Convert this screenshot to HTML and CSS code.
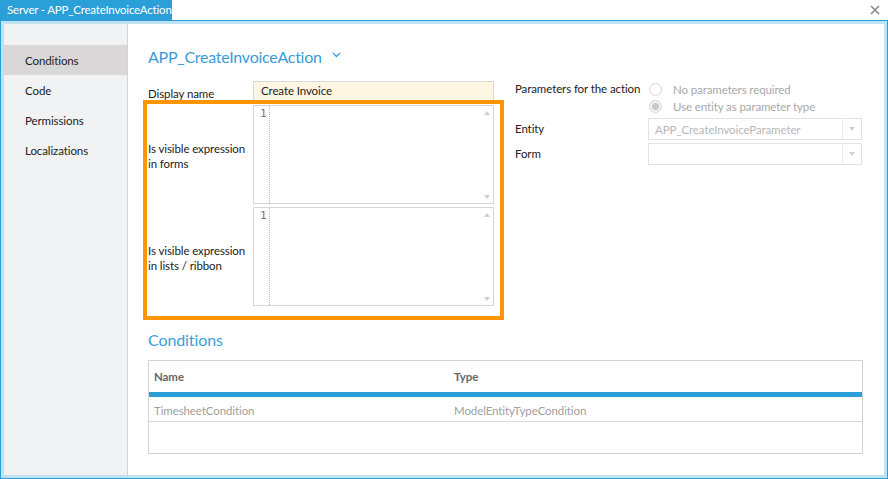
FILE: index.html
```html
<!DOCTYPE html>
<html>
<head>
<meta charset="utf-8">
<link rel="stylesheet" href="styles.css">
</head>
<body>
<div class="window">
  <div class="titlebar">
    <div class="tab">Server - APP_CreateInvoiceAction</div>
    <div class="close">
      <svg width="10" height="10" viewBox="0 0 10 10"><path d="M1 1L9 9M9 1L1 9" stroke="#8a8a8a" stroke-width="1.6"/></svg>
    </div>
  </div>
  <div class="frame">
    <div class="inner">
      <nav class="sidebar">
        <div class="nav-item active">Conditions</div>
        <div class="nav-item">Code</div>
        <div class="nav-item">Permissions</div>
        <div class="nav-item">Localizations</div>
      </nav>
      <main class="main">
        <div class="title">
          <span>APP_CreateInvoiceAction</span>
          <svg class="chev" width="9" height="6" viewBox="0 0 9 6"><path d="M1 1L4.5 4.5L8 1" fill="none" stroke="#3a9bd8" stroke-width="1.3"/></svg>
        </div>
        <div class="top">
          <div class="form">
            <div class="lbl">Display name</div>
            <div class="input">Create Invoice</div>
            <div class="lbl lbl-ed">Is visible expression<br>in forms</div>
            <div class="editor">
              <div class="gutter">1</div>
              <div class="code"></div>
              <div class="scroll"><span class="up"></span><span class="down"></span></div>
            </div>
            <div class="lbl lbl-ed">Is visible expression<br>in lists / ribbon</div>
            <div class="editor">
              <div class="gutter">1</div>
              <div class="code"></div>
              <div class="scroll"><span class="up"></span><span class="down"></span></div>
            </div>
            <div class="highlight"></div>
          </div>
          <div class="params">
            <div class="plbl">Parameters for the action</div>
            <div class="radios">
              <div class="radio"><span class="circle"></span>No parameters required</div>
              <div class="radio"><span class="circle checked"></span>Use entity as parameter type</div>
            </div>
            <div class="plbl mid">Entity</div>
            <div class="select"><span class="val">APP_CreateInvoiceParameter</span><span class="arrow"></span></div>
            <div class="plbl mid">Form</div>
            <div class="select"><span class="val"></span><span class="arrow"></span></div>
          </div>
        </div>
        <h2 class="section">Conditions</h2>
        <div class="table">
          <div class="thead">
            <div class="c1">Name</div>
            <div class="c2">Type</div>
          </div>
          <div class="bar"></div>
          <div class="row">
            <div class="c1">TimesheetCondition</div>
            <div class="c2">ModelEntityTypeCondition</div>
          </div>
          <div class="row empty"></div>
        </div>
      </main>
    </div>
  </div>
</div>
</body>
</html>
```

FILE: styles.css
```css
* { box-sizing: border-box; }
html, body { margin: 0; padding: 0; }
body {
  width: 888px;
  height: 479px;
  overflow: hidden;
  background: #fff;
  font-family: "Segoe UI", Lato, "Noto Sans", sans-serif;
  font-size: 11.5px;
  letter-spacing: -0.1px;
  color: #222;
}
.window { width: 888px; height: 479px; display: flex; flex-direction: column; }
.titlebar { height: 20px; display: flex; justify-content: space-between; align-items: stretch; }
.tab {
  width: 172px;
  background: #2a9fd8;
  color: #fff;
  padding-left: 7px;
  line-height: 20px;
  font-size: 11.5px;
  letter-spacing: -0.2px;
  white-space: nowrap;
}
.close { width: 20px; display: flex; align-items: center; justify-content: center; margin-right: 3px; }
.frame {
  flex: 1;
  border: 1px solid #2a9fd8;
}
.inner {
  height: 100%;
  border: 3px solid #bfe1f4;
  display: flex;
}
.sidebar {
  width: 124px;
  background: #f1f2f4;
  border-right: 1px solid #d3d3d3;
  padding-top: 21px;
  display: flex;
  flex-direction: column;
}
.nav-item { height: 30px; line-height: 30px; padding: 1px 0 0 21px; }
.nav-item.active { background: #d9d7d7; }
.main { flex: 1; padding: 22px 0 0 20px; position: relative; }
.title {
  height: 20px;
  display: flex;
  align-items: center;
  color: #3a9bd8;
  font-size: 16px;
  letter-spacing: -0.25px;
}
.chev { margin-left: 10px; margin-top: -3px; }
.top { display: flex; gap: 21px; margin-top: 15px; }
.form {
  position: relative;
  display: grid;
  grid-template-columns: 105px 241px;
  grid-template-rows: 20px 99px 99px;
  row-gap: 3.5px;
}
.lbl { display: flex; align-items: center; padding-top: 4px; line-height: 15px; white-space: nowrap; }
.lbl-ed { padding-top: 3px; }
.input {
  background: #fdf6e3;
  border: 1px solid #d8d8d8;
  padding-left: 7px;
  line-height: 18px;
}
.editor {
  border: 1px solid #d5d5d5;
  display: flex;
  background: #fff;
}
.gutter {
  width: 16px;
  border-right: 1px dotted #b8b8b8;
  color: #777;
  font-family: "DejaVu Sans Mono", monospace;
  font-size: 11px;
  padding-left: 6px;
  padding-top: 1px;
  line-height: 14px;
}
.code { flex: 1; }
.scroll {
  width: 12px;
  display: flex;
  flex-direction: column;
  justify-content: space-between;
  align-items: center;
  padding: 5px 0 4px;
}
.up, .down { width: 0; height: 0; border-left: 3.5px solid transparent; border-right: 3.5px solid transparent; }
.up { border-bottom: 4px solid #cfcfcf; }
.down { border-top: 4px solid #cfcfcf; }
.highlight {
  position: absolute;
  left: -5px;
  top: 19px;
  width: 361px;
  height: 220px;
  border: 4.5px solid #ff9500;
  pointer-events: none;
}
.params {
  width: 347px;
  display: grid;
  grid-template-columns: 133px 214px;
  row-gap: 3px;
  align-content: start;
  align-items: center;
}
.plbl { line-height: 16px; align-self: start; white-space: nowrap; }
.plbl.mid { align-self: center; }
.radios { display: flex; flex-direction: column; color: #a8a8a8; }
.radio { height: 17px; display: flex; align-items: center; }
.circle {
  width: 13px; height: 13px;
  border-radius: 50%;
  border: 1px solid #d4d4d4;
  background: #fff;
  margin: 0 11px 0 1px;
  display: flex; align-items: center; justify-content: center;
}
.circle.checked { background: #f3f3f3; }
.circle.checked::after {
  content: "";
  width: 7px; height: 7px; border-radius: 50%; background: #c8c8c8;
}
.select {
  height: 22px;
  border: 1px solid #e2e2e2;
  display: flex;
  align-items: center;
  color: #b8b8b8;
}
.select .val { flex: 1; padding-left: 6px; }
.select .arrow {
  width: 19px; height: 100%;
  border-left: 1px solid #ececec;
  display: flex; align-items: center; justify-content: center;
}
.select .arrow::after {
  content: "";
  border-left: 3.5px solid transparent; border-right: 3.5px solid transparent;
  border-top: 4px solid #d0d0d0;
}
.section {
  margin: 24px 0 0;
  font-weight: normal;
  font-size: 16px;
  color: #3aa0dc;
  line-height: 20px;
  height: 20px;
}
.table {
  margin-top: 10px;
  width: 715px;
  border: 1px solid #d3d3d3;
}
.thead { height: 31px; display: flex; align-items: center; font-weight: bold; color: #666; }
.c1 { width: 300px; padding-left: 5px; }
.c2 { flex: 1; padding-left: 5px; }
.bar { height: 5px; background: #2a9fd8; }
.row { height: 25px; display: flex; align-items: center; color: #a0a0a0; border-bottom: 1px solid #d8d8d8; padding-top: 2px; }
.row.empty { height: 31px; border-bottom: none; }
```
